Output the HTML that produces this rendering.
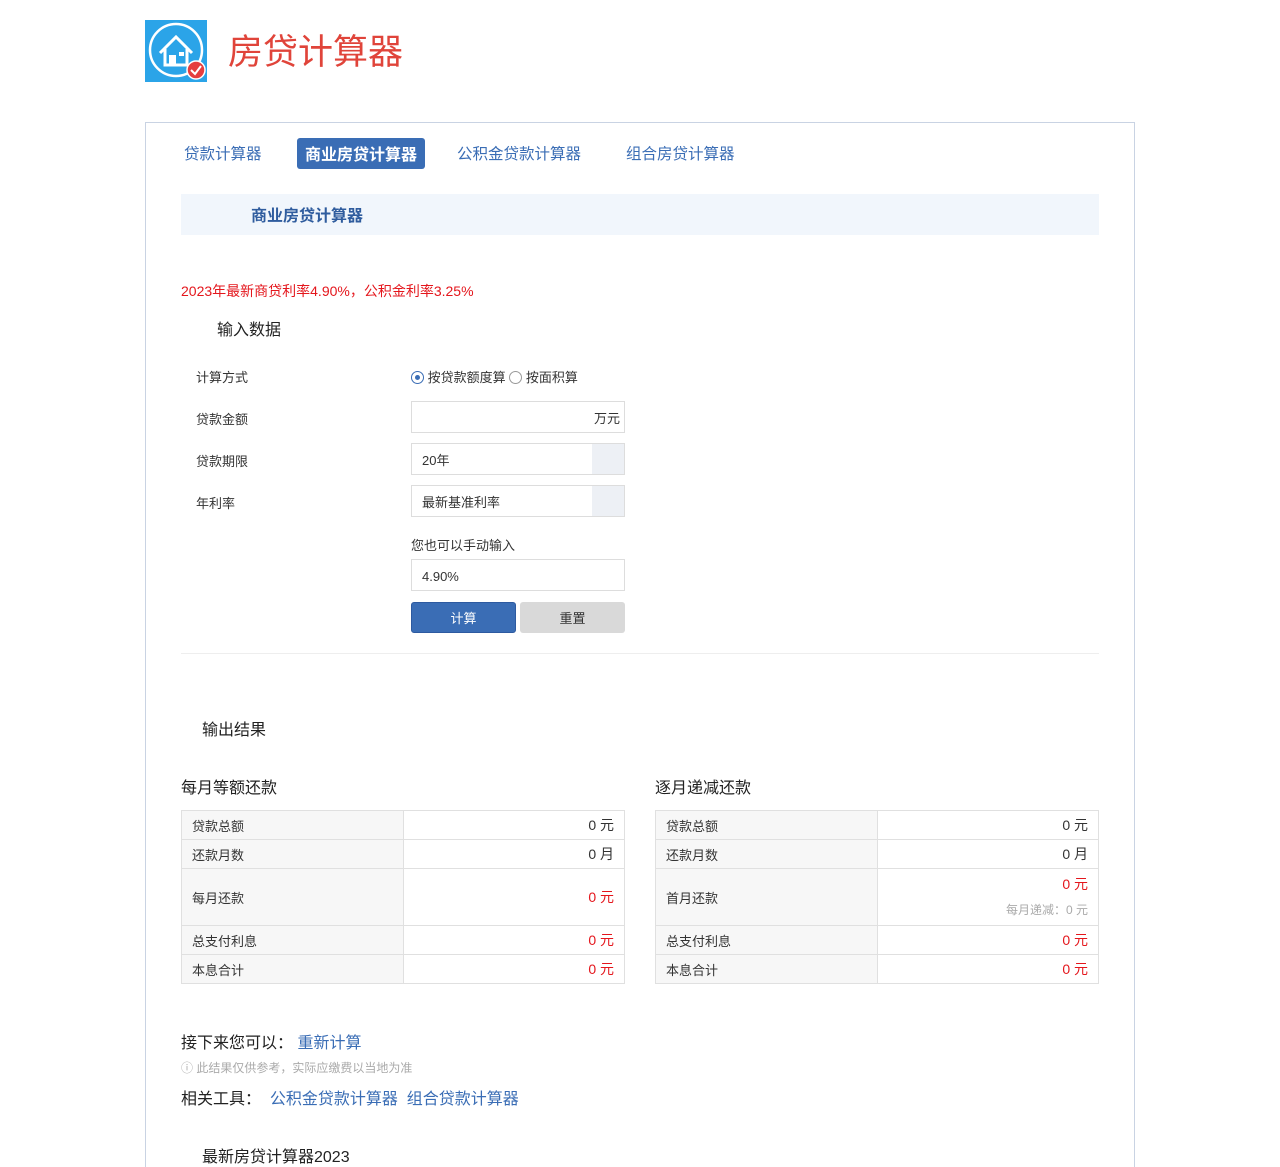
<!DOCTYPE html>
<html><head><meta charset="utf-8"><style>
*{margin:0;padding:0;box-sizing:border-box}
html,body{width:1280px;height:1167px;overflow:hidden}
body{background:#fff;font-family:"Liberation Sans","Noto Sans CJK SC",sans-serif;font-size:13px;color:#333;position:relative}
.a{position:absolute;white-space:nowrap}
.box{position:absolute;left:145px;top:122px;width:990px;height:1100px;border:1px solid #c9d3e3;border-bottom:none}
.tab{position:absolute;top:139px;height:31px;line-height:31px;font-size:15px;color:#3a6db5}
.inp{position:absolute;left:411px;width:214px;height:32px;border:1px solid #ddd;background:#fff;line-height:32px;padding-left:10px;font-size:13px;color:#333}
.inp .s{position:absolute;right:0;top:0;width:32px;height:30px;background:#edf0f5}
table{position:absolute;top:810px;width:444px;border-collapse:collapse;font-size:13px}
td{border:1px solid #e0e0e0;height:29px;padding:0 10px}
td.l{background:#f7f7f7;width:222px}
td.r{text-align:right;font-size:14px}
.red{color:#e4161c}
.lk{color:#3a6db5}
</style></head><body>
<svg class="a" style="left:145px;top:20px" width="62" height="62" viewBox="0 0 62 62">
<rect width="62" height="62" fill="#2ba4e8"/>
<circle cx="31" cy="30" r="26" fill="none" stroke="#fff" stroke-width="2.5"/>
<path d="M15 33 L31 17 L47 33 M20 29 V45 H42 V29" fill="none" stroke="#fff" stroke-width="3"/>
<rect x="24" y="35" width="7" height="10" fill="#fff"/><rect x="34" y="32" width="5" height="4" fill="#fff"/>
<circle cx="51" cy="50" r="9" fill="#e53e3e" stroke="#fff" stroke-width="1.5"/>
<path d="M46 50 L50 54 L56 46" fill="none" stroke="#fff" stroke-width="2"/>
</svg>
<div class="a" style="left:228px;top:31px;font-size:35px;color:#e0443a;line-height:44px">房贷计算器</div>
<div class="box"></div>
<div class="tab" style="left:184px;font-size:15.5px">贷款计算器</div>
<div class="a" style="left:297px;top:138px;width:128px;height:31px;line-height:31px;background:#3a6db5;color:#fff;border-radius:3px;text-align:center;font-weight:bold;font-size:16px;padding-top:2px">商业房贷计算器</div>
<div class="tab" style="left:457px;font-size:15.5px">公积金贷款计算器</div>
<div class="tab" style="left:626px;font-size:15.5px">组合房贷计算器</div>
<div class="a" style="left:181px;top:194px;width:918px;height:41px;background:#f1f6fc"></div>
<div class="a" style="left:251px;top:196px;line-height:41px;font-size:16px;font-weight:bold;color:#2f5c9e">商业房贷计算器</div>
<div class="a red" style="left:181px;top:281px;font-size:14px">2023年最新商贷利率4.90%，公积金利率3.25%</div>
<div class="a" style="left:217px;top:316px;font-size:16px;color:#222">输入数据</div>
<div class="a" style="left:196px;top:367px">计算方式</div>
<div class="a" style="left:196px;top:409px">贷款金额</div>
<div class="a" style="left:196px;top:451px">贷款期限</div>
<div class="a" style="left:196px;top:493px">年利率</div>
<div class="a" style="left:411px;top:367px">
<span style="display:inline-block;width:13px;height:13px;border:1.5px solid #3a6db5;border-radius:50%;vertical-align:-2px;position:relative"><span style="position:absolute;left:2.5px;top:2.5px;width:5px;height:5px;border-radius:50%;background:#3a6db5"></span></span> 按贷款额度算 <span style="display:inline-block;width:13px;height:13px;border:1.5px solid #999;border-radius:50%;vertical-align:-2px"></span> 按面积算</div>
<div class="inp" style="top:401px;text-align:right;padding-right:4px;line-height:34px">万元</div>
<div class="inp" style="top:443px;line-height:34px">20年<span class="s"></span></div>
<div class="inp" style="top:485px;line-height:34px">最新基准利率<span class="s"></span></div>
<div class="a" style="left:411px;top:535px">您也可以手动输入</div>
<div class="inp" style="top:559px;line-height:34px">4.90%</div>
<div class="a" style="left:411px;top:602px;width:105px;height:31px;background:#3a6db5;border:1px solid #2d5aa0;border-radius:3px;color:#fff;text-align:center;line-height:31px">计算</div>
<div class="a" style="left:520px;top:602px;width:105px;height:31px;background:#d9d9d9;border-radius:3px;text-align:center;line-height:33px">重置</div>
<div class="a" style="left:181px;top:653px;width:918px;height:1px;background:#eee"></div>
<div class="a" style="left:202px;top:716px;font-size:16px;color:#222">输出结果</div>
<div class="a" style="left:181px;top:774px;font-size:16px;color:#222">每月等额还款</div>
<div class="a" style="left:655px;top:774px;font-size:16px;color:#222">逐月递减还款</div>
<table style="left:181px">
<tr><td class="l">贷款总额</td><td class="r">0 元</td></tr>
<tr><td class="l">还款月数</td><td class="r">0 月</td></tr>
<tr><td class="l" style="height:57px">每月还款</td><td class="r red">0 元</td></tr>
<tr><td class="l">总支付利息</td><td class="r red">0 元</td></tr>
<tr><td class="l">本息合计</td><td class="r red">0 元</td></tr>
</table>
<table style="left:655px">
<tr><td class="l">贷款总额</td><td class="r">0 元</td></tr>
<tr><td class="l">还款月数</td><td class="r">0 月</td></tr>
<tr><td class="l" style="height:57px">首月还款</td><td class="r" style="line-height:25px"><span class="red">0 元</span><br><span style="color:#aaa;font-size:12px">每月递减：0 元</span></td></tr>
<tr><td class="l">总支付利息</td><td class="r red">0 元</td></tr>
<tr><td class="l">本息合计</td><td class="r red">0 元</td></tr>
</table>
<div class="a" style="left:181px;top:1029px;font-size:16px;color:#222">接下来您可以： <span class="lk">重新计算</span></div>
<div class="a" style="left:181px;top:1059px;font-size:12px;color:#aaa">ⓘ 此结果仅供参考，实际应缴费以当地为准</div>
<div class="a" style="left:181px;top:1085px;font-size:16px;color:#222">相关工具： <span class="lk">&nbsp;公积金贷款计算器 &nbsp;组合贷款计算器</span></div>
<div class="a" style="left:202px;top:1143px;font-size:16px;color:#222">最新房贷计算器2023</div>
</body></html>
